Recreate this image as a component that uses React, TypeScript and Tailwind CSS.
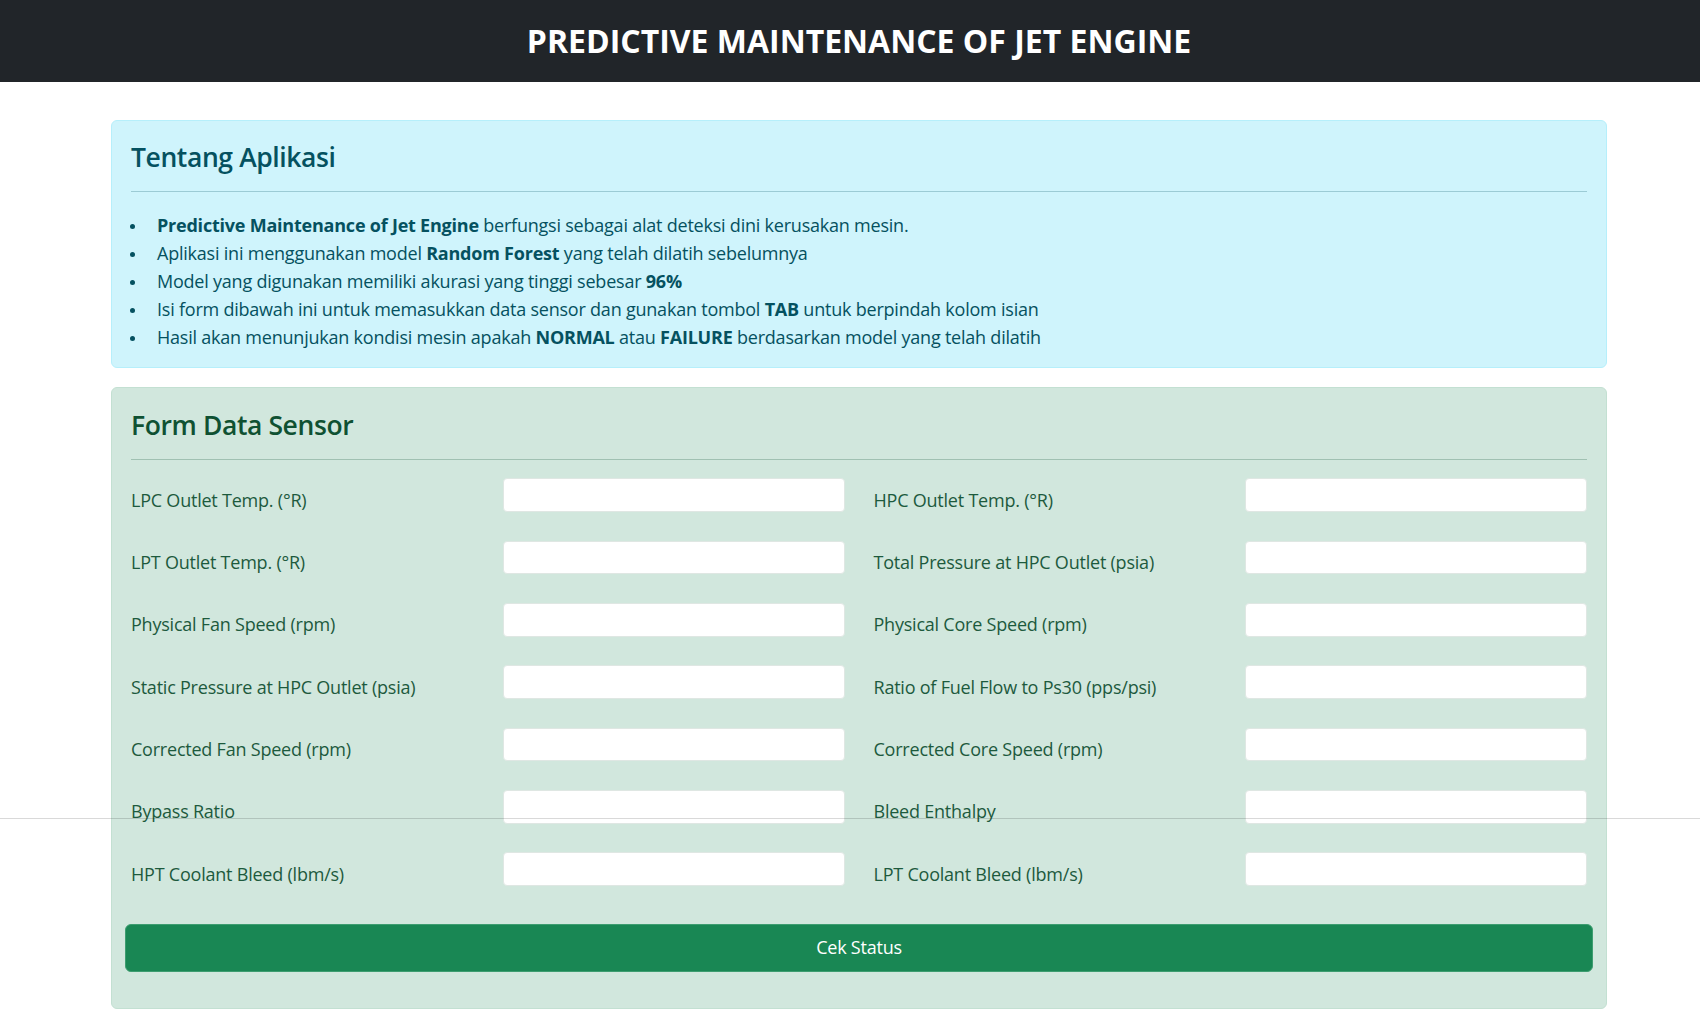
import React from "react";

type FieldPair = [string, string];

const fieldRows: FieldPair[] = [
  ["LPC Outlet Temp. (°R)", "HPC Outlet Temp. (°R)"],
  ["LPT Outlet Temp. (°R)", "Total Pressure at HPC Outlet (psia)"],
  ["Physical Fan Speed (rpm)", "Physical Core Speed (rpm)"],
  ["Static Pressure at HPC Outlet (psia)", "Ratio of Fuel Flow to Ps30 (pps/psi)"],
  ["Corrected Fan Speed (rpm)", "Corrected Core Speed (rpm)"],
  ["Bypass Ratio", "Bleed Enthalpy"],
  ["HPT Coolant Bleed (lbm/s)", "LPT Coolant Bleed (lbm/s)"],
];

const infoItems: React.ReactNode[] = [
  <>
    <strong className="font-bold">Predictive Maintenance of Jet Engine</strong> berfungsi sebagai alat deteksi dini kerusakan mesin.
  </>,
  <>
    Aplikasi ini menggunakan model <strong className="font-bold">Random Forest</strong> yang telah dilatih sebelumnya
  </>,
  <>
    Model yang digunakan memiliki akurasi yang tinggi sebesar <strong className="font-bold">96%</strong>
  </>,
  <>
    Isi form dibawah ini untuk memasukkan data sensor dan gunakan tombol <strong className="font-bold">TAB</strong> untuk berpindah kolom isian
  </>,
  <>
    Hasil akan menunjukan kondisi mesin apakah <strong className="font-bold">NORMAL</strong> atau{" "}
    <strong className="font-bold">FAILURE</strong> berdasarkan model yang telah dilatih
  </>,
];

const SensorField = ({ label }: { label: string }) => {
  return (
    <div className="flex h-[33.5px] items-center">
      {/* label sits a bit lower than the input, like a col-form-label */}
      <label className="mt-[11px] flex-1 text-[18px] leading-[27.6px] tracking-[-0.22px] text-[#1d5a3d]">{label}</label>
      <input
        type="text"
        className="h-[33.5px] w-[342px] shrink-0 rounded-[4px] border border-[#dfe7e3] bg-white px-2 text-[16px] outline-none"
      />
    </div>
  );
};

const App = () => {
  return (
    <div className="relative min-h-[1027px] bg-white font-['Open_Sans',sans-serif]">
      <header className="flex h-[82px] items-center justify-center bg-[#212529] pl-[18px]">
        <h1 className="text-[32px] font-bold text-white">PREDICTIVE MAINTENANCE OF JET ENGINE</h1>
      </header>

      <main className="pl-[18px]">
        {/* Tentang aplikasi */}
        <section className="mx-auto mt-[38px] w-[1496px] rounded-[6px] border border-[#b6effb] bg-[#cff4fc] px-[19px] pt-[20.4px] pb-[16.4px] text-[#055160]">
          <h4 className="text-[26.5px] leading-[33px] font-semibold tracking-[-0.4px]">Tentang Aplikasi</h4>
          <div className="mt-[17px] h-px bg-[#9ccbd5]" />
          <ul className="mt-[18.6px] text-[18px] leading-[28px] tracking-[-0.22px]">
            {infoItems.map((item, i) => (
              <li key={i} className="flex items-center">
                <span className="flex w-[26px] shrink-0">
                  <span className="mt-[3px] ml-[-1.5px] h-[5.5px] w-[5.5px] rounded-full bg-current" />
                </span>
                <span>{item}</span>
              </li>
            ))}
          </ul>
        </section>

        {/* Form */}
        <section className="mx-auto mt-[19px] w-[1496px] rounded-[6px] border border-[#c3e0d2] bg-[#d1e7dd] px-[19px] pt-[20.4px] pb-[36px] text-[#0f5132]">
          <h4 className="text-[26.5px] leading-[33px] font-semibold tracking-[-0.4px]">Form Data Sensor</h4>
          <div className="mt-[17px] h-px bg-[#a0c1b2]" />

          <div className="mt-[18.6px] grid grid-cols-2 gap-x-[29px] gap-y-[28.83px]">
            {fieldRows.map(([left, right]) => (
              <React.Fragment key={left}>
                <SensorField label={left} />
                <SensorField label={right} />
              </React.Fragment>
            ))}
          </div>

          <button
            type="button"
            className="-mx-[6px] mt-[38px] flex h-[48px] w-[calc(100%+12px)] items-center justify-center rounded-[6px] border border-[#3d9d70] bg-[#198754] text-[18px] tracking-[-0.22px] text-white"
          >
            Cek Status
          </button>
        </section>
      </main>

      {/* thin seam line across the screenshot */}
      <div className="pointer-events-none absolute top-[818px] right-0 left-0 h-px bg-black/15" />
    </div>
  );
};

export default App;
